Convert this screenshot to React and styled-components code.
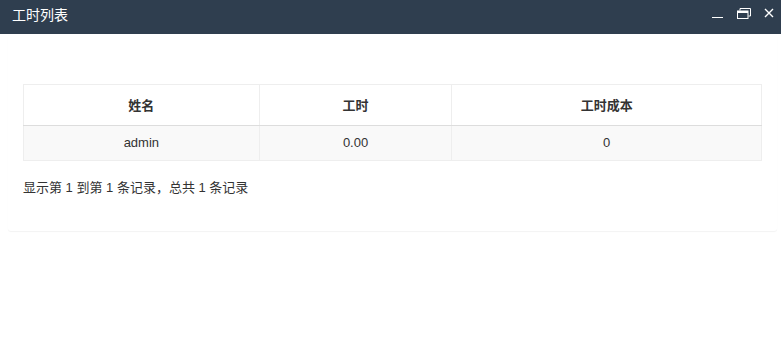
import React from 'react';
import styled, { createGlobalStyle } from 'styled-components';

const GlobalStyle = createGlobalStyle`
  html, body {
    margin: 0;
    padding: 0;
    background: #fff;
    font-family: "Liberation Sans", Arial, "Noto Sans CJK SC", sans-serif;
    font-size: 13px;
    color: #333;
  }
`;

const Window = styled.div`
  width: 781px;
  height: 363px;
  background: #fff;
  overflow: hidden;
`;

const TitleBar = styled.div`
  display: flex;
  align-items: center;
  justify-content: space-between;
  height: 34px;
  padding: 0 7px 0 12px;
  background: #2f3e4f;
  color: #fff;
  box-sizing: border-box;
`;

const Title = styled.div`
  font-size: 14px;
  font-family: "Noto Sans CJK SC", sans-serif;
  line-height: 20px;
  margin-top: -6px;
`;

const Controls = styled.div`
  display: flex;
  align-items: center;
  gap: 13px;
  margin-top: -8px;
`;

const ControlButton = styled.span`
  display: flex;
  align-items: center;
  justify-content: center;
  color: #fff;
`;

const Content = styled.div`
  padding: 0 4px 0 8px;
`;

const Panel = styled.div`
  background: #fff;
  border-radius: 3px;
  box-shadow: 0 1px 1px rgba(0, 0, 0, 0.05);
  padding: 50px 15px 34px;
`;

const Table = styled.table`
  width: 100%;
  table-layout: fixed;
  border-collapse: collapse;
  border: 1px solid #eeeeee;
`;

const Col = styled.col`
  width: ${(p) => p.pct}%;
`;

const HeadCell = styled.th`
  padding: 10px 8px;
  line-height: 20px;
  font-size: 13px;
  font-weight: bold;
  text-align: center;
  color: #333;
  font-family: "Noto Sans CJK SC", sans-serif;
  border: 1px solid #eeeeee;
  border-bottom: 1px solid #dddddd;
`;

const Row = styled.tr`
  background: ${(p) => (p.striped ? '#f9f9f9' : '#fff')};
`;

const Cell = styled.td`
  padding: 8px;
  line-height: 18px;
  text-align: center;
  color: #333;
  border: 1px solid #eeeeee;
`;

const Pagination = styled.div`
  margin-top: 18px;
  line-height: 18px;
  font-size: 13px;
  color: #333;
  font-family: "Liberation Sans", "Noto Sans CJK SC", sans-serif;
`;

const MinimizeIcon = () => (
  <svg width="12" height="12" viewBox="0 0 12 12">
    <rect x="0" y="10" width="11" height="1" fill="#fff" />
  </svg>
);

const RestoreIcon = () => (
  <svg width="14" height="11" viewBox="0 0 14 11">
    <path d="M3 2.5 V0.5 H13.5 V8 H11.5" fill="none" stroke="#fff" strokeWidth="1" />
    <rect x="0.5" y="3" width="10.5" height="7.5" fill="none" stroke="#fff" strokeWidth="1" />
    <rect x="0.5" y="3" width="10.5" height="2" fill="#fff" />
  </svg>
);

const CloseIcon = () => (
  <svg width="10" height="10" viewBox="0 0 10 10">
    <path d="M1 1 L9 9 M9 1 L1 9" stroke="#fff" strokeWidth="1.4" />
  </svg>
);

const columns = [
  { title: '姓名', width: 236 },
  { title: '工时', width: 193 },
  { title: '工时成本', width: 310 },
];

const rows = [{ name: 'admin', hours: '0.00', cost: '0' }];

const total = columns.reduce((s, c) => s + c.width, 0);

const App = () => (
  <>
    <GlobalStyle />
    <Window>
      <TitleBar>
        <Title>工时列表</Title>
        <Controls>
          <ControlButton>
            <MinimizeIcon />
          </ControlButton>
          <ControlButton>
            <RestoreIcon />
          </ControlButton>
          <ControlButton>
            <CloseIcon />
          </ControlButton>
        </Controls>
      </TitleBar>
      <Content>
        <Panel>
          <Table>
            <colgroup>
              {columns.map((c) => (
                <Col key={c.title} pct={(c.width / total) * 100} />
              ))}
            </colgroup>
            <thead>
              <tr>
                {columns.map((c) => (
                  <HeadCell key={c.title}>{c.title}</HeadCell>
                ))}
              </tr>
            </thead>
            <tbody>
              {rows.map((r, i) => (
                <Row key={i} striped={i % 2 === 0}>
                  <Cell>{r.name}</Cell>
                  <Cell>{r.hours}</Cell>
                  <Cell>{r.cost}</Cell>
                </Row>
              ))}
            </tbody>
          </Table>
          <Pagination>显示第 1 到第 1 条记录，总共 1 条记录</Pagination>
        </Panel>
      </Content>
    </Window>
  </>
);

export default App;
